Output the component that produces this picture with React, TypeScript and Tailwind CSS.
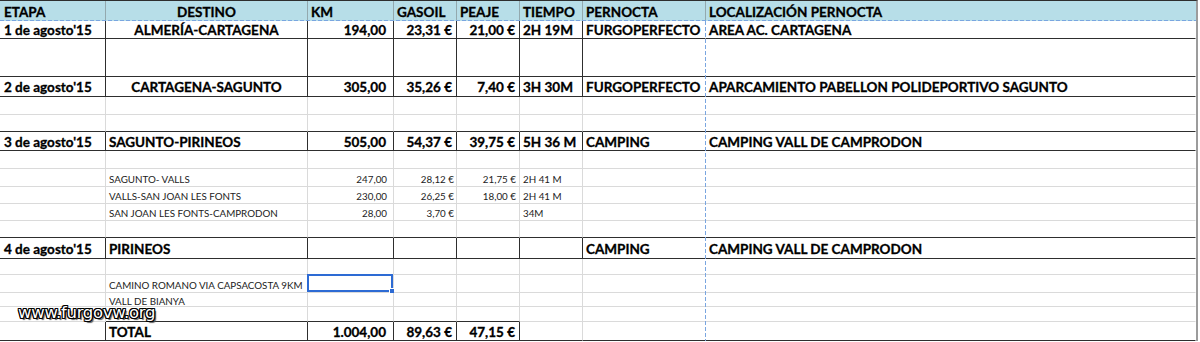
import React from 'react';

type L = 'd' | 'l' | 'g' | 'n';

const RIGHT: Record<L, string> = {
  d: 'border-r border-r-[#2e2e2e]',
  l: 'border-r border-r-[#dadada]',
  g: 'border-r border-r-[#93a9ae]',
  n: 'border-r border-r-transparent',
};

const BOTTOM: Record<L, string> = {
  d: 'border-b border-b-[#2e2e2e]',
  l: 'border-b border-b-[#dadada]',
  g: 'border-b border-b-[#93a9ae]',
  n: 'border-b border-b-transparent',
};

// per column alignment
const ALIGN = [
  'justify-start pl-1',
  'justify-start pl-[3px]',
  'justify-end pr-[7px]',
  'justify-end pr-[4px]',
  'justify-end pr-[4px]',
  'justify-start pl-[3px]',
  'justify-start pl-[3px]',
  'justify-start pl-[3px]',
];

const SMALL_ALIGN = [
  'justify-start pl-1',
  'justify-start pl-[3px]',
  'justify-end pr-[6px]',
  'justify-end pr-[2px]',
  'justify-end pr-[3px]',
  'justify-start pl-[3px]',
  'justify-start pl-[3px]',
  'justify-start pl-[3px]',
];

type Kind = 'head' | 'bold' | 'small' | 'none';

interface Row {
  kind: Kind;
  v: L[];
  b: L[];
  cells: React.ReactNode[];
  center?: boolean;
}

const vD: L[] = ['d', 'd', 'd', 'd', 'd', 'd', 'n', 'n'];
const vL: L[] = ['l', 'l', 'l', 'l', 'l', 'l', 'n', 'n'];
const bD: L[] = ['d', 'd', 'd', 'd', 'd', 'd', 'd', 'd'];
const bL: L[] = ['l', 'l', 'l', 'l', 'l', 'l', 'l', 'l'];
const empty = ['', '', '', '', '', '', '', ''];

const rows: Row[] = [
  {
    kind: 'head',
    v: ['g', 'g', 'g', 'g', 'g', 'g', 'g', 'n'],
    b: ['n', 'n', 'n', 'n', 'n', 'n', 'n', 'n'],
    cells: ['ETAPA', 'DESTINO', 'KM', 'GASOIL', 'PEAJE', 'TIEMPO', 'PERNOCTA', 'LOCALIZACIÓN PERNOCTA'],
    center: true,
  },
  {
    kind: 'bold',
    v: vD,
    b: bD,
    cells: ["1 de agosto'15", 'ALMERÍA-CARTAGENA', '194,00', '23,31 €', '21,00 €', '2H 19M', 'FURGOPERFECTO', 'AREA AC. CARTAGENA'],
    center: true,
  },
  { kind: 'bold', v: vD, b: bD, cells: empty },
  {
    kind: 'bold',
    v: vD,
    b: bD,
    cells: ["2 de agosto'15", 'CARTAGENA-SAGUNTO', '305,00', '35,26 €', '7,40 €', '3H 30M', 'FURGOPERFECTO', 'APARCAMIENTO PABELLON POLIDEPORTIVO SAGUNTO'],
    center: true,
  },
  { kind: 'none', v: vL, b: bL, cells: empty },
  { kind: 'none', v: vL, b: bD, cells: empty },
  {
    kind: 'bold',
    v: vD,
    b: bD,
    cells: ["3 de agosto'15", 'SAGUNTO-PIRINEOS', '505,00', '54,37 €', '39,75 €', '5H 36 M', 'CAMPING', 'CAMPING VALL DE CAMPRODON'],
  },
  { kind: 'none', v: vL, b: bL, cells: empty },
  { kind: 'small', v: vL, b: bL, cells: ['', 'SAGUNTO- VALLS', '247,00', '28,12 €', '21,75 €', '2H 41 M', '', ''] },
  { kind: 'small', v: vL, b: bL, cells: ['', 'VALLS-SAN JOAN LES FONTS', '230,00', '26,25 €', '18,00 €', '2H 41 M', '', ''] },
  { kind: 'small', v: vL, b: bL, cells: ['', 'SAN JOAN LES FONTS-CAMPRODON', '28,00', '3,70 €', '', '34M', '', ''] },
  { kind: 'none', v: vL, b: bD, cells: empty },
  {
    kind: 'bold',
    v: vD,
    b: bD,
    cells: ["4 de agosto'15", 'PIRINEOS', '', '', '', '', 'CAMPING', 'CAMPING VALL DE CAMPRODON'],
  },
  { kind: 'none', v: vL, b: bL, cells: empty },
  { kind: 'small', v: vL, b: bL, cells: ['', 'CAMINO ROMANO VIA CAPSACOSTA 9KM', 'SEL', '', '', '', '', ''] },
  { kind: 'small', v: vL, b: bL, cells: ['', 'VALL DE BIANYA', '', '', '', '', '', ''] },
  { kind: 'none', v: vL, b: ['l', 'd', 'd', 'd', 'd', 'l', 'l', 'l'], cells: empty },
  {
    kind: 'bold',
    v: ['d', 'd', 'd', 'd', 'd', 'l', 'n', 'n'],
    b: bD,
    cells: ['', 'TOTAL', '1.004,00', '89,63 €', '47,15 €', '', '', ''],
  },
];

const TEXT: Record<Kind, string> = {
  head: 'font-bold text-[13.5px] text-black bg-[#b7dee8] pt-[4px] [-webkit-text-stroke:0.3px_#000]',
  bold: 'font-bold text-[13.5px] text-black pt-[3px] [-webkit-text-stroke:0.3px_#000]',
  small: 'text-[9.8px] text-[#222] pt-[4px]',
  none: '',
};

const Selected = () => (
  <div className="absolute -left-px -top-px right-0 bottom-0 border-2 border-[#2d6bd4]">
    <div className="absolute -right-[4px] -bottom-[4px] w-[6px] h-[6px] bg-[#2d6bd4] border border-white" />
  </div>
);

function alignFor(row: Row, ci: number) {
  if (ci === 1 && row.center) return 'justify-center';
  if (row.kind === 'head') return ci === 0 ? 'justify-start pl-1' : 'justify-start pl-[3px]';
  if (row.kind === 'small') return SMALL_ALIGN[ci];
  return ALIGN[ci];
}

export default function App() {
  return (
    <div className="w-[1200px] h-[342px] bg-white overflow-hidden font-['Lato','Liberation_Sans',sans-serif]">
      <div className="relative w-[1198px] border-t border-t-[#2e2e2e] border-r-2 border-r-[#9c9c9c]">
        <div className="grid grid-cols-[106px_202px_86px_63px_63px_63px_123px_1fr] grid-rows-[20px_18px_38px_20px_18px_17px_19px_18px_18px_17px_17px_17px_21px_16px_18px_14px_15px_19px]">
          {rows.map((row, ri) =>
            row.cells.map((c, ci) => (
              <div
                key={`${ri}-${ci}`}
                className={`relative flex items-center whitespace-nowrap leading-none ${RIGHT[row.v[ci]]} ${BOTTOM[row.b[ci]]} ${TEXT[row.kind]} ${alignFor(row, ci)}`}
              >
                {c === 'SEL' ? <Selected /> : c}
              </div>
            ))
          )}
        </div>

        {/* page break lines */}
        <div className="absolute left-0 right-0 top-[19px] h-px bg-[repeating-linear-gradient(to_right,#7aa6e0_0_4px,transparent_4px_6px)]" />
        <div className="absolute left-[705px] top-[20px] bottom-0 w-px bg-[repeating-linear-gradient(to_bottom,#7aa6e0_0_4px,transparent_4px_6px)]" />

        {/* watermark */}
        <div className="absolute left-[18px] top-[304px] text-[16.5px] leading-none text-white tracking-[-0.3px] font-['DejaVu_Sans',sans-serif] [text-shadow:1px_0_0_#000,-1px_0_0_#000,0_1px_0_#000,0_-1px_0_#000,1px_1px_0_#000,-1px_-1px_0_#000,1px_-1px_0_#000,-1px_1px_0_#000,2px_2px_1px_#555]">
          www.furgovw.org
        </div>
      </div>
    </div>
  );
}
